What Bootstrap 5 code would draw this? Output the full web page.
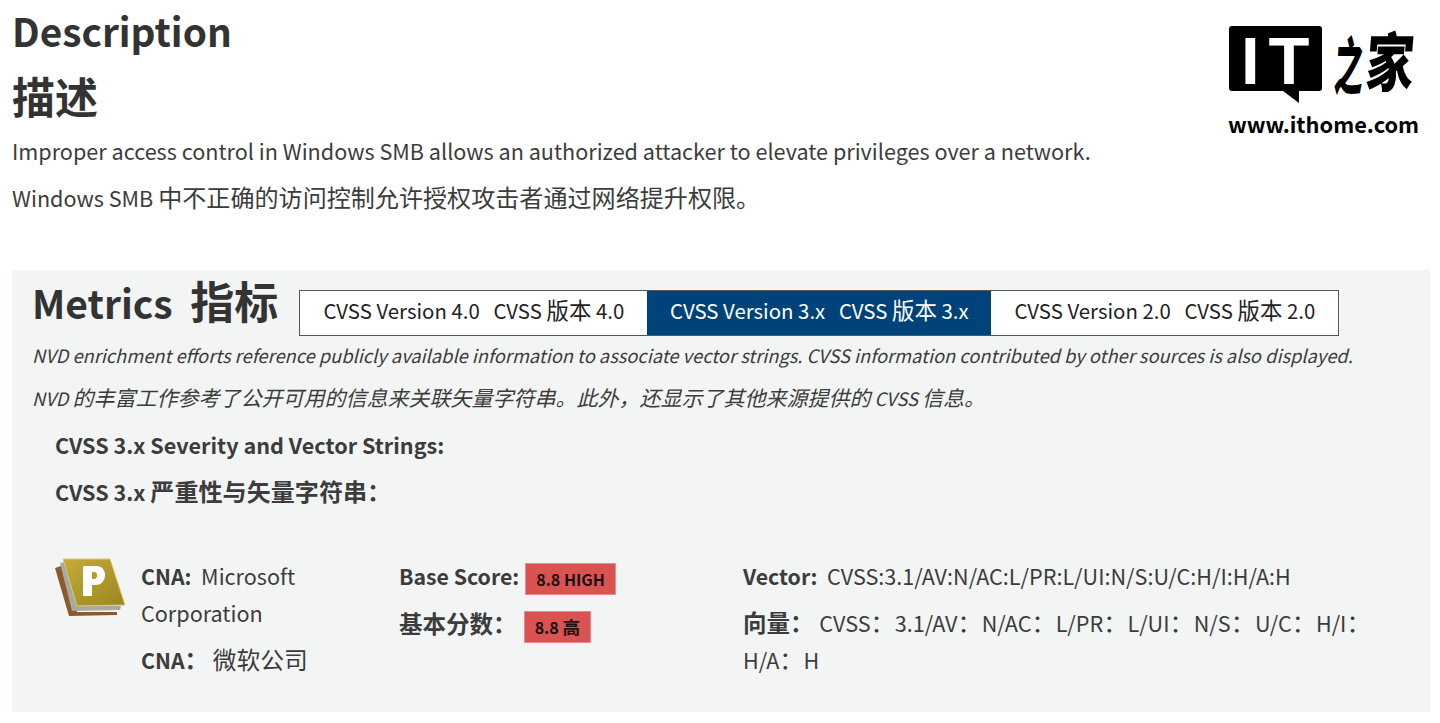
<!DOCTYPE html>
<html lang="zh-CN">
<head>
  <meta charset="UTF-8" />
  <meta name="viewport" content="width=device-width, initial-scale=1" />
  <title>Description</title>
  <link href="https://cdn.jsdelivr.net/npm/bootstrap@5.3.3/dist/css/bootstrap.min.css" rel="stylesheet" />
  <style>
    body {
      background: #fff;
      color: #3c3c3c;
      font-family: "Noto Sans CJK SC", "Noto Sans", sans-serif;
      height: 723px;
      overflow: hidden;
    }

    .zh { font-size: 1.1em; line-height: 1; }

    .page-wrap { padding: 0 10px 0 12px; }

    .desc-title {
      font-size: 38.8px;
      font-weight: 700;
      line-height: 61px;
      margin: 0;
      color: #333;
    }
    .desc-title.zh-title { font-size: 43px; line-height: 68px; margin-bottom: -2px; }

    .desc-text {
      font-size: 21.6px;
      line-height: 47px;
      margin: 0;
    }
    .desc-text .zh { font-size: 1.115em; }

    .metrics-panel {
      background: #f3f5f5;
      margin-top: 49px;
      height: 442px;
      padding: 10px 20px;
    }

    .head-row { height: 54px; }

    .metrics-title {
      font-size: 39px;
      font-weight: 700;
      line-height: 36px;
      margin: -2px 0 0;
      color: #333;
      white-space: pre;
    }
    .metrics-title .zh { font-size: 44px; }

    .ver-tabs { margin-left: 21px; margin-top: 10px; height: 46px; border: 1px solid #555; }
    .ver-tab {
      font-size: 20.4px;
      line-height: 38px;
      color: #222;
      background: #fff;
      white-space: pre;
      text-align: center;
    }
    .ver-tab.on { background: #00437a; color: #fff; }
    .tab-a { width: 347px; }
    .tab-b { width: 344px; }
    .tab-c { width: 347px; }

    .note-text {
      font-size: 18.3px;
      font-style: italic;
      line-height: 43px;
      margin: 0;
      white-space: nowrap;
    }
    .note-text .zh { font-size: 1.148em; }
    .sev-text {
      font-size: 21.6px;
      font-weight: 700;
      line-height: 46.5px;
      margin: 0 0 0 23px;
    }
    .sev-first { margin-top: 2px; }
    .sev-text .zh { font-size: 1.115em; }

    .score-row { margin-top: 42px; margin-left: 23px; font-size: 21.6px; line-height: 37px; }
    .score-row .item-line { margin-bottom: 10px; }
    .cna-col { width: 344px; padding-left: 86px; position: relative; }
    .score-col { width: 344px; }
    .vec-col { width: 640px; }
    .vec-zh .zh { font-size: 1.12em; }
    .pdot { position: absolute; left: 0; top: 1px; }
    .lbl { font-weight: 700; font-size: .985em; }
    .lbl.zh { font-size: 1.09em; }
    .vec-zh .lbl.zh { font-size: 1.09em; margin-right: -4px; }
    .sev-badge {
      display: inline-block;
      background: #db5252;
      border: 1px solid #e78a8a;
      color: #1a1010;
      font-size: 16px;
      font-weight: 700;
      line-height: 30px;
      padding: 0 10px;
      vertical-align: middle;
    }
    .badge-gap { margin-left: 6px; }
    .badge-gap-zh { margin-left: 7px; }

    .logo-box { position: absolute; left: 1229px; top: 26px; width: 192px; }
    .logo-it {
      background: #000;
      color: #fff;
      width: 93px;
      height: 65px;
      border-radius: 3px;
      font-family: "Liberation Sans", sans-serif;
      font-weight: 700;
      font-size: 67px;
      line-height: 70px;
      letter-spacing: 9px;
      padding-left: 12px;
      position: relative;
    }
    .logo-tail { position: absolute; left: 54px; top: 65px; }
    .logo-cn { color: #000; font-weight: 900; margin-left: 15px; height: 65px; }
    .logo-zhi, .logo-jia { display: inline-block; line-height: 1; }
    .logo-zhi { font-size: 40px; width: 28px; transform: translateY(15px) scale(.72, 1.55) skewX(-8deg); transform-origin: 0 0; margin-top: -9px; }
    .logo-jia { font-size: 48px; width: 48px; margin-left: 4px; transform: scale(1, 1.33) skewX(-6deg); transform-origin: 0 0; }
    .logo-url { font-size: 21.8px; font-weight: 700; color: #000; line-height: 30px; margin-top: 18px; margin-left: -1px; white-space: nowrap; }
  </style>
</head>
<body>
  <div class="page-wrap">
    <h2 class="desc-title">Description</h2>
    <h2 class="desc-title zh-title">描述</h2>
    <p class="desc-text">Improper access control in Windows SMB allows an authorized attacker to elevate privileges over a network.</p>
    <p class="desc-text">Windows SMB <span class="zh">中不正确的访问控制允许授权攻击者通过网络提升权限。</span></p>

    <div class="metrics-panel">
      <div class="head-row d-flex align-items-start">
        <h3 class="metrics-title">Metrics  <span class="zh">指标</span></h3>
        <div class="ver-tabs d-flex">
          <div class="ver-tab tab-a">CVSS Version 4.0   CVSS <span class="zh">版本</span> 4.0</div>
          <div class="ver-tab tab-b on">CVSS Version 3.x   CVSS <span class="zh">版本</span> 3.x</div>
          <div class="ver-tab tab-c">CVSS Version 2.0   CVSS <span class="zh">版本</span> 2.0</div>
        </div>
      </div>
      <p class="note-text">NVD enrichment efforts reference publicly available information to associate vector strings. CVSS information contributed by other sources is also displayed.</p>
      <p class="note-text">NVD <span class="zh">的丰富工作参考了公开可用的信息来关联矢量字符串。此外，还显示了其他来源提供的</span> CVSS <span class="zh">信息。</span></p>
      <p class="sev-text sev-first">CVSS 3.x Severity and Vector Strings:</p>
      <p class="sev-text">CVSS 3.x <span class="zh">严重性与矢量字符串：</span></p>

      <div class="score-row d-flex">
        <div class="cna-col">
          <svg class="pdot" width="72" height="60" viewBox="0 0 72 60">
            <defs>
              <linearGradient id="goldFill" x1="0" y1="0" x2="1" y2="1">
                <stop offset="0" stop-color="#c4ab3a"/>
                <stop offset="1" stop-color="#9c8620"/>
              </linearGradient>
            </defs>
            <polygon points="0,10 6,8 22,54 62,54 62,57 14,58" fill="#8a5a2b"/>
            <polygon points="5,5 10,4 24,48 66,48 65,52 17,53" fill="#a8a8a4"/>
            <polygon points="8,1 55,1 70,47 22,48" fill="url(#goldFill)" stroke="#d8cb72"/>
            <path d="M28 8h13c6 0 9 4 9 9s-3 10-10 10h-3v11h-9zM37 14v7h2c2 0 3-1 3-3.500s-1-3.500-3-3.500z" fill="#fff" fill-rule="evenodd"/>
          </svg>
          <div class="item-line"><span class="lbl">CNA:</span>&nbsp; Microsoft Corporation</div>
          <div class="item-line"><span class="lbl">CNA<span class="zh">：</span></span> <span class="zh">微软公司</span></div>
        </div>
        <div class="score-col">
          <div class="item-line"><span class="lbl">Base Score:</span><span class="sev-badge badge-gap">8.8 HIGH</span></div>
          <div class="item-line"><span class="lbl zh">基本分数：</span><span class="sev-badge badge-gap-zh">8.8 <span class="zh">高</span></span></div>
        </div>
        <div class="vec-col">
          <div class="item-line"><span class="lbl">Vector:</span>&nbsp; CVSS:3.1/AV:N/AC:L/PR:L/UI:N/S:U/C:H/I:H/A:H</div>
          <div class="item-line vec-zh"><span class="lbl zh">向量：</span>&nbsp; CVSS<span class="zh">：</span>3.1/AV<span class="zh">：</span>N/AC<span class="zh">：</span>L/PR<span class="zh">：</span>L/UI<span class="zh">：</span>N/S<span class="zh">：</span>U/C<span class="zh">：</span>H/I<span class="zh">：</span>H/A<span class="zh">：</span>H</div>
        </div>
      </div>
    </div>
  </div>

  <div class="logo-box">
    <div class="d-flex">
      <div class="logo-it">IT
        <svg class="logo-tail" width="16" height="12" viewBox="0 0 16 12"><polygon points="0,0 16,0 16,12" fill="#000"/></svg>
      </div>
      <div class="logo-cn d-flex"><span class="logo-zhi">之</span><span class="logo-jia">家</span></div>
    </div>
    <div class="logo-url">www.ithome.com</div>
  </div>

  <script src="https://cdn.jsdelivr.net/npm/bootstrap@5.3.3/dist/js/bootstrap.bundle.min.js"></script>
</body>
</html>
